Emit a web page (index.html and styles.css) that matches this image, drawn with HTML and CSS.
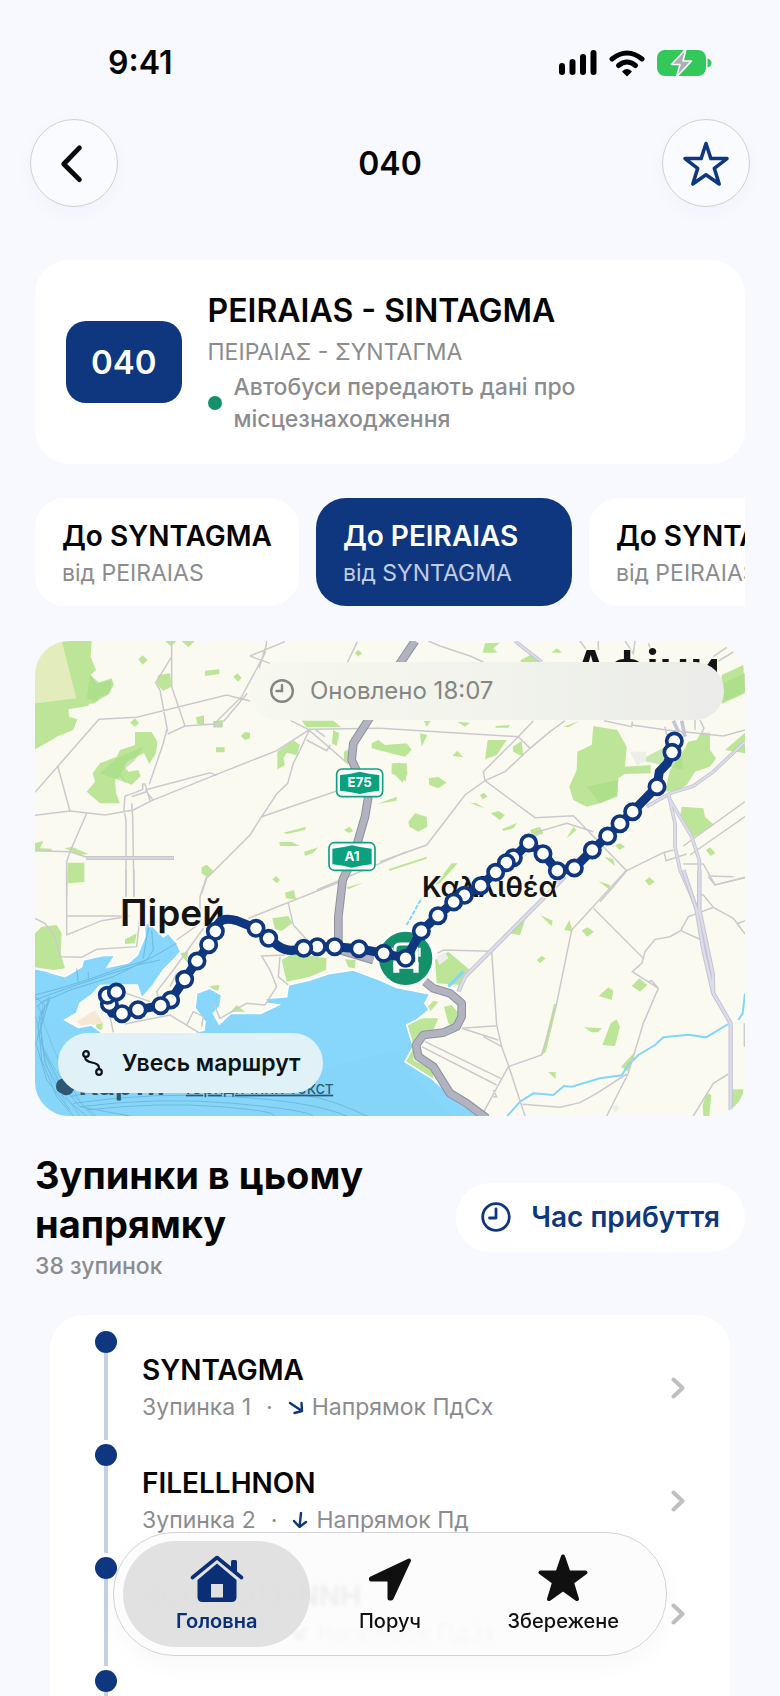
FILE: index.html
```html
<!DOCTYPE html>
<html lang="uk">
<head>
<meta charset="utf-8">
<meta name="viewport" content="width=device-width, initial-scale=1">
<title>040</title>
<link rel="stylesheet" href="styles.css">
</head>
<body>
<div class="app">
  <div class="status">
    <span class="status-time">9:41</span>
    <span class="status-icons">
      <svg width="38" height="26" viewBox="0 0 38 26" fill="#000"><rect x="0" y="13" width="6" height="12" rx="3"/><rect x="10.500" y="9" width="6" height="16" rx="3"/><rect x="21" y="4" width="6" height="21" rx="3"/><rect x="31.500" y="0" width="6" height="25" rx="3"/></svg>
      <svg width="36" height="27" viewBox="0 0 36 27" fill="none" stroke="#000" stroke-width="5" stroke-linecap="round"><path d="M3 9Q18-3 33 9"/><path d="M9.500 15.500Q18 8.500 26.500 15.500"/><path d="M14 21.500Q18 18 22 21.500L18 25.500Z" fill="#000" stroke-width="1.500" stroke-linejoin="round"/></svg>
      <svg width="55" height="28" viewBox="0 0 55 28"><rect x="0" y="1" width="49" height="26" rx="8" fill="#34c759"/><path d="M50.500 9.500q4 1 4 4.500t-4 4.500z" fill="#34c759"/><path d="M29 0L14.500 15.500H23L19.500 28L34.500 12H26Z" fill="#aeaeb4" stroke="#f8f9ff" stroke-width="1.600" stroke-linejoin="round"/></svg>
    </span>
  </div>

  <header class="nav">
    <button class="round" type="button" aria-label="Назад"><svg width="86" height="86" viewBox="0 0 88 88" fill="none" stroke="#0b0b0d" stroke-width="5" stroke-linecap="round" stroke-linejoin="round"><path d="M49.500 28.500L33.500 45L49.500 61"/></svg></button>
    <h1>040</h1>
    <button class="round" type="button" aria-label="Зберегти"><svg width="86" height="86" viewBox="0 0 88 88" fill="none" stroke="#0e377f" stroke-width="3.600" stroke-linejoin="round"><path d="M44 24L49 39.500L65.500 39.500L52.500 49.500L57.500 65.500L44 56L30.500 65.500L35.500 49.500L22.500 39.500L39 39.500Z"/></svg></button>
  </header>

  <main class="content">
    <section class="card route">
      <span class="badge">040</span>
      <div class="route-text">
        <h2>PEIRAIAS - SINTAGMA</h2>
        <p class="greek">ΠΕΙΡΑΙΑΣ - ΣΥΝΤΑΓΜΑ</p>
        <p class="live"><i class="live-dot"></i><span>Автобуси передають дані про місцезнаходження</span></p>
      </div>
    </section>

    <div class="directions">
      <button class="direction" type="button"><strong>До SYNTAGMA</strong><span>від PEIRAIAS</span></button>
      <button class="direction selected" type="button"><strong>До PEIRAIAS</strong><span>від SYNTAGMA</span></button>
      <button class="direction" type="button"><strong>До SYNTAGMA</strong><span>від PEIRAIAS</span></button>
    </div>

    <section class="map">
      <svg class="map-art" viewBox="45 33 2130 1425" preserveAspectRatio="xMidYMid slice">
        <rect x="45" y="33" width="2130" height="1425" fill="#fbfaf1"/>
        <path fill="#e3ecbd" d="M45 33H125L180 205L45 220Z"/>
        <g fill="#bde597">
          <path d="M125 33H215L212 80 228 120 212 135 230 160 275 145 282 165 262 195 240 200 225 220 178 225 168 200Z"/>
          <path d="M45 220L170 205 210 210 205 228 145 238 148 260 172 268 160 300 110 320 95 330 45 358Z"/>
          <path d="M345 306H395L412 335 408 370 388 402 372 370 325 392 312 410 325 425 355 420 362 438 335 465 315 455 300 440 285 450 288 490 300 520 240 520 200 485 225 455 218 430 240 400 290 380 300 360 345 345Z"/>
          <path d="M415 135L450 130 455 170 430 182 408 160ZM555 122L598 118V132L555 138ZM355 88L368 76 383 90 368 104ZM640 140L652 130 665 144 654 155ZM435 33H470L452 48ZM485 33H525L505 52ZM330 278L345 265 357 280 345 290ZM528 262L552 256V282H532ZM662 318L675 306 690 308V325L675 330ZM588 352H614V367H588ZM582 274L608 270V290H582Z"/>
          <path d="M845 272H940L964 292H860ZM772 365L820 330 840 345 830 375 800 368 790 385 795 405 772 418ZM940 300L958 310 950 348 936 340ZM972 365L985 358 985 400 972 390ZM1055 340L1075 330 1095 345 1160 340 1175 360 1155 380 1120 372 1055 355ZM1115 402L1140 398 1160 410 1158 455 1140 435 1115 432ZM1072 522L1130 500 1130 512ZM790 608L858 590 855 600 800 612ZM778 636H815L840 648H780ZM852 665L895 652 880 668 855 678ZM972 600L988 590 1000 604 985 608ZM45 640L70 632 60 655 95 656V664H45ZM135 655L155 650 205 672 180 675ZM143 698H193V756L143 760ZM545 712L560 704 580 722 562 742 545 730ZM757 748L768 738 780 750 770 760ZM1005 68L1015 60 1026 70 1014 80Z"/>
          <g transform="translate(1080 0)">
            <path d="M640 288L712 300 740 350 735 410 812 405V430L735 432 715 445 712 500 660 520 620 530 580 510 568 470 590 420 592 365 635 345Z"/>
            <path d="M925 335L950 330 962 308H990V360L1008 385 990 410 945 425 920 465 895 480 855 485 870 420 900 380ZM1025 135L1090 105 1095 190 1025 222ZM1035 360L1095 308V370ZM905 530L970 535 975 560 1002 585 940 622 900 560ZM315 40L360 38 340 55 352 68 308 68ZM515 68L530 55 547 68ZM422 90L450 75 485 96H422ZM550 290L600 272 565 292ZM232 275L270 278 255 290ZM345 288L390 285 385 293H348ZM132 273H152L140 290ZM120 310L142 315 125 350ZM323 330L380 330 350 375 315 388ZM398 350L425 333 430 380 400 365ZM217 378L232 362 250 382ZM38 400L80 400 82 430 68 458 35 425ZM146 445L175 440 200 458 175 475 148 465ZM300 495L312 488 322 500 308 508ZM268 518L290 520 312 535ZM332 550L355 543 375 555 360 570ZM366 598L412 578 400 595 370 603ZM85 575L105 550 140 560 142 590 115 605 88 590ZM25 718L140 680 140 686 30 722ZM165 765L215 700 233 700 180 760ZM450 600L480 590 490 610 460 622ZM560 625L580 590 590 600ZM705 645L720 640 735 650 718 660ZM672 680L700 688 705 708ZM978 660L990 652 1006 668 992 678ZM795 752L808 742 824 755 808 767ZM655 753L690 765V780Z"/>
          </g>
          <g transform="translate(0 720)">
            <path d="M45 190L65 170 110 165 125 190 122 250 135 295 100 300 45 292ZM315 208L350 190 345 220 315 222ZM757 145L805 138 817 160 785 183 765 178ZM795 68L822 60 828 88 798 85ZM980 52L1030 38 985 58ZM785 270L820 250 920 265 918 300 870 320 800 335ZM975 268L1007 270 1005 295 985 292ZM480 250L505 245 500 275ZM570 348L598 345 595 362 575 358ZM632 425L650 405 675 425ZM228 460L250 455 245 480 228 478Z"/>
          </g>
          <g transform="translate(1080 720)">
            <path d="M165 270L205 245 270 300 240 345 170 340ZM385 190L435 150 420 195ZM480 135L518 152 515 168ZM552 180L568 150 578 184ZM605 182L622 172 642 185 622 200ZM470 270L485 258 497 265 480 280ZM656 378L685 352 700 362 695 390ZM755 348L778 325 802 345 780 365ZM612 472L665 475 655 487H635ZM667 525L692 460 710 448 720 470 705 528ZM505 606H527V628ZM485 555L522 402H532L498 545ZM75 460L130 445 175 445 160 480 130 490 105 520 100 570 158 600 160 628 75 575ZM192 410L215 405 245 440 235 480 205 460ZM140 415L160 392 175 396 150 425ZM968 705L980 668 994 675 988 738H970ZM1058 658H1090V705L1050 720ZM723 590L765 545 745 605Z"/>
          </g>
        </g>
        <path fill="#a4db84" opacity=".6" d="M210 135L240 160 275 150 270 190 230 215 200 205ZM240 430L290 385 370 350 345 390 300 430 320 460 270 440ZM1860 390L1975 330 1990 420ZM2110 160L2175 130V185L2110 215ZM1700 470L1795 450 1790 495 1740 520Z"/>
        <path fill="#ededea" d="M1830 365H1878V395L1850 405ZM1250 980L1275 965 1285 985 1258 1005ZM1775 1432L1790 1422 1798 1436 1785 1448Z"/>
        <path fill="#f7e8d4" d="M170 1175L225 1140 250 1180 190 1190Z"/>
        <g transform="translate(0 720)">
          <path fill="#87d6fb" stroke="#fff" stroke-width="5" d="M40 295L75 302 100 310 135 320 185 290 190 270 222 262 250 256 285 256 262 292 325 278 352 255 358 240 375 200 372 155 395 165 430 200 445 190 470 218 482 245 468 262 430 300 400 345 365 385 352 345 320 345 240 347 215 375 180 400 170 430 135 450 175 472 215 465 250 492 510 490 552 480 555 455 525 415 530 370 570 355 605 375 600 410 580 430 598 462 632 430 722 430 775 405 740 400 735 385 800 380 805 345 870 330 930 310 1000 300 1080 330 1130 352 1180 362 1230 372 1215 400 1228 420 1190 450 1160 465 1180 530 1155 575 1235 625 1320 700 1400 742H40Z"/>
          <path fill="#7fd0f7" d="M1300 742L1180 620 1130 540 900 600 700 742Z" opacity=".2"/>
        </g>
        <g fill="none" stroke="#5ba6d0" stroke-width="3" opacity=".6">
          <path d="M45 1110L100 1090 170 1065 260 1035 340 1010 400 980 470 940M45 1095L120 1075 200 1050 300 1015 380 990 400 960 395 900M60 1120L150 1080 280 1040 350 1005 420 990M45 1100L75 1125 62 1200 75 1300 130 1400 200 1458M50 1130L90 1100 55 1180 65 1290 110 1400 160 1458M60 1150L85 1120 48 1240 80 1350 150 1440M90 1110L58 1160 70 1260 120 1360 180 1430 330 1458M175 1060L170 1015M205 1045V1025M370 985L380 920 390 880"/>
          <path d="M150 1400Q260 1375 480 1380T800 1390 1000 1440 1060 1458M160 1420Q400 1385 640 1400T980 1458M180 1430Q420 1400 640 1420T880 1458M200 1440Q420 1415 600 1430T760 1458"/>
          <path stroke-width="2" d="M55 1125Q90 1250 160 1380T300 1458M48 1160Q60 1300 180 1458M70 1110Q40 1290 140 1420M52 1210Q120 1380 230 1458"/>
        </g>
        <g fill="none" stroke="#83d6f8" stroke-width="6">
          <path d="M1462 1458L1500 1415 1540 1390 1600 1395 1632 1368 1655 1370 1740 1345 1805 1336 1825 1305 1855 1275 1905 1245 1930 1222 2005 1214 2058 1222 2125 1182"/>
          <path d="M2175 1090L2168 1150 2155 1170"/><path d="M1160 885L1205 805" stroke-dasharray="14 4"/><path d="M1285 1070L1330 1025" stroke-width="9"/>
        </g>
        <g fill="none" stroke="#cacace" stroke-width="4.500">
          <path d="M455 40V170L495 288M455 80L407 158 420 180 443 305M45 487L237 268 350 262 620 195 690 213M113 408L150 543M45 556L150 543 255 555 340 540 395 512 590 433 770 362 870 298 1080 295M375 480L570 428 590 436M390 512L375 462H368V478L345 488 315 498 312 540 318 570V800M335 520L338 560 342 800M335 500L380 485 400 512M200 550L150 665 140 695V800M45 662L150 665 200 682M443 312L495 288 582 282 665 200 735 70 740 33M610 275L682 190M582 275H605V290H582ZM440 300L430 340 388 462M690 78L795 35M690 78L750 100M735 55L718 115M1012 35L983 96M812 272L865 298 985 402M870 295L845 350 820 400 803 460 770 492 725 560 690 615 585 720 560 745 545 790M725 560L950 483M860 330L920 362 930 345M885 298L915 320M890 780L1080 700 1160 665"/>
          <path d="M198 684H462" stroke-width="12" stroke="#c6c6ca"/><path d="M198 684H460" stroke="#dcdce0" stroke-width="4"/>
        </g>
        <g transform="translate(1080 0)" fill="none" stroke="#cacace" stroke-width="4.500">
          <path d="M145 33L180 48 270 78 310 96M0 295L415 320 310 425 315 452 375 425 450 355 415 320 460 272M450 355L510 305 555 272M315 452L255 495 140 645 0 695M315 452L465 563 580 557 660 640M465 608L560 580 640 605M660 640L740 722 700 770 660 815M740 722L850 668 880 660M852 665L858 692 920 672M672 272L755 290 757 275M755 285L860 300 1030 318 1095 300M860 315L855 290M945 270V300M960 270L972 295 965 308M1095 515L910 648M1095 560L930 675M910 702H970L1005 765 1095 743M985 738L1060 740M600 33L620 60M655 33V60M735 33L760 70 765 33M805 40L820 75M1010 96L1060 66M1000 80L1040 52"/>
          <g stroke="#c3c4d4" stroke-width="11"><path d="M405 33L485 96M880 272L895 305M905 272L915 320M1095 335L1000 425 940 468 870 490 800 530M865 490L885 580V650L900 720 940 810 960 860M870 510L935 620 958 690V840"/></g>
          <g stroke="#dcdde8" stroke-width="6"><path d="M405 33L485 96M1095 335L1000 425 940 468 870 490 800 530M865 490L885 580V650L900 720 940 810 960 860M870 510L935 620 958 690V840"/></g>
        </g>
        <g transform="translate(0 720)" fill="none" stroke="#cacace" stroke-width="4.500">
          <path d="M140 0V195L245 152 330 138M140 138H320M45 145L75 160 105 200 120 260 185 262 230 238 350 230 360 140M318 0V80M342 0V80M560 20L540 80V160L470 210M685 145L970 32M805 100L820 165 870 220M550 175L460 300 410 365 415 380M280 350L320 370 390 395M315 462L450 435 540 490M470 310L450 350M500 465L520 425 550 440 545 470M280 487L270 440M795 255L725 258 750 300 770 350 735 405 680 400 600 445 580 400M780 260L775 320 805 345"/>
        </g>
        <g transform="translate(1080 720)" fill="none" stroke="#cacace" stroke-width="4.500">
          <path d="M172 250L190 240 335 244 350 465 365 530 385 585 435 738M245 475L350 467M245 475L355 510M310 500L365 530M125 530L350 645M135 515L362 625M310 728L385 590 485 555 530 400 575 180 740 0M640 115L790 265 785 280 757 305 835 355 790 460 745 610 680 738M805 335L815 332 835 355M790 265L795 245 825 208 870 200 902 182 925 140 1000 112 970 75H950M902 182L965 210M1000 112L1060 145 1075 165 1095 192M1070 162L1095 152M985 20L1005 45 1095 22M740 612L650 670 600 698 540 712 428 703M340 660L350 680 340 680M940 738L1000 640 1045 612M1093 460V530"/>
          <path stroke="#c3c4d4" stroke-width="13" d="M555 20L330 245 255 320 235 365M910 0L950 120 970 240 1000 370 1052 460V720M958 0V120L975 200 998 310 1000 370"/>
          <path stroke="#dcdde8" stroke-width="7" d="M555 20L330 245 255 320 235 365M910 0L950 120 970 240 1000 370 1052 460V720M958 0V120L975 200 998 310 1000 370"/>
        </g>
        <g fill="none" stroke-linejoin="round">
          <path stroke="#8e919c" stroke-width="26" d="M1185 33L1140 100 1045 270 1000 340 995 390 1045 500 1035 560 1000 680 968 750 955 860V950M960 960L1060 990M1215 1055L1240 1075 1290 1090 1325 1120V1160L1310 1190 1270 1208 1210 1215 1188 1245 1195 1280 1240 1310 1290 1390 1340 1420 1400 1465"/>
          <path stroke="#b1b4c0" stroke-width="20" d="M1185 33L1140 100 1045 270 1000 340 995 390 1045 500 1035 560 1000 680 968 750 955 860V950M960 960L1060 990M1215 1055L1240 1075 1290 1090 1325 1120V1160L1310 1190 1270 1208 1210 1215 1188 1245 1195 1280 1240 1310 1290 1390 1340 1420 1400 1465"/>
        </g>
        <g class="shields">
          <g transform="translate(948 415)"><rect x="2" y="2" width="138" height="83" rx="16" fill="#fff" stroke="#12a083" stroke-width="5"/><path d="M12 20Q40 18 71 10Q102 18 130 20V67Q102 69 71 77Q40 69 12 67Z" fill="#0aa17f"/><text x="71" y="57">E75</text></g>
          <g transform="translate(925 636)"><rect x="2" y="2" width="138" height="83" rx="16" fill="#fff" stroke="#12a083" stroke-width="5"/><path d="M12 20Q40 18 71 10Q102 18 130 20V67Q102 69 71 77Q40 69 12 67Z" fill="#0aa17f"/><text x="71" y="57">A1</text></g>
        </g>
        <g class="places">
          <text x="1658" y="168" font-size="150">Афіни</text>
          <text x="300" y="888" font-size="111">Пірей</text>
          <text x="1206" y="800" font-size="84">Καλλιθέα</text>
        </g>
        <g class="attribution">
          <path d="M108 1370q0-26 30-24q24 0 28 22q-6 18-14 24q-18 8-28-2q-16-6-16-20z"/>
          <text x="176" y="1396" font-size="84" font-weight="700">Карти</text>
          <text x="498" y="1391" font-size="51" text-decoration="underline">Юридичний текст</text>
        </g>
        <circle cx="1157" cy="985" r="84" fill="#14906a" stroke="#fff" stroke-width="8"/>
        <path fill="none" stroke="#fff" stroke-width="9" stroke-linejoin="round" d="M1125 1010V955Q1125 943 1140 942H1175Q1190 943 1190 955V1010Z"/>
        <path fill="#fff" d="M1120 996H1196V1028H1180V1016H1138V1028H1120ZM1112 953H1119V980H1112ZM1195 953H1202V980H1195Z"/>
        <path fill="none" stroke="#0e377f" stroke-width="27" stroke-linejoin="round" stroke-linecap="round" d="M1963 333L1956 367 1942 400 1918 425 1911 470 1838 545 1800 581 1763 618 1717 660 1663 714 1612 722 1569 671 1526 639 1480 683 1427 727 1382 767 1333 796 1301 816 1254 857 1204 903 1175 955 1157 985 1091 970 1017 956 944 950 892 950 851 955Q805 970 775 948L746 925 708 895 650 872Q610 860 595 880L566 944 531 993 494 1048 452 1110 422 1127 354 1139 306 1151 276 1150 262 1120V1096L289 1086"/>
        <g fill="#fff" stroke="#0e377f" stroke-width="11">
          <circle cx="1963" cy="333" r="23"/><circle cx="1956" cy="367" r="23"/><circle cx="1911" cy="470" r="23"/><circle cx="1838" cy="545" r="23"/><circle cx="1800" cy="581" r="23"/><circle cx="1763" cy="618" r="23"/><circle cx="1717" cy="660" r="23"/><circle cx="1663" cy="714" r="23"/><circle cx="1612" cy="722" r="23"/><circle cx="1569" cy="671" r="23"/><circle cx="1526" cy="639" r="23"/><circle cx="1480" cy="683" r="23"/><circle cx="1459" cy="698" r="23"/><circle cx="1427" cy="727" r="23"/><circle cx="1382" cy="767" r="23"/><circle cx="1333" cy="796" r="23"/><circle cx="1301" cy="816" r="23"/><circle cx="1254" cy="857" r="23"/><circle cx="1204" cy="903" r="23"/><circle cx="1157" cy="985" r="23"/><circle cx="1091" cy="970" r="23"/><circle cx="1017" cy="956" r="23"/><circle cx="892" cy="950" r="23"/><circle cx="944" cy="950" r="23"/><circle cx="851" cy="955" r="23"/><circle cx="746" cy="925" r="23"/><circle cx="708" cy="895" r="23"/><circle cx="586" cy="904" r="23"/><circle cx="566" cy="944" r="23"/><circle cx="531" cy="993" r="23"/><circle cx="494" cy="1048" r="23"/><circle cx="452" cy="1110" r="23"/><circle cx="422" cy="1127" r="23"/><circle cx="354" cy="1139" r="23"/><circle cx="268" cy="1122" r="23"/><circle cx="306" cy="1151" r="23"/><circle cx="262" cy="1096" r="23"/><circle cx="289" cy="1086" r="23"/>
        </g>
      </svg>
      <p class="updated"><svg width="24" height="24" viewBox="0 0 24 24" fill="none" stroke="#858683" stroke-width="2.400" stroke-linecap="round"><circle cx="12" cy="12" r="10.800"/><path d="M12 6V12H6.500"/></svg>Оновлено 18:07</p>
      <button class="whole" type="button"><svg width="24" height="26" viewBox="0 0 24 26" fill="none" stroke="#0c1418" stroke-width="2.200" stroke-linecap="round"><circle cx="5" cy="4" r="2.800"/><circle cx="18" cy="22" r="2.800"/><path d="M4 7C4 15 19 10 18 19"/></svg>Увесь маршрут</button>
    </section>

    <section class="stops-head">
      <div>
        <h2>Зупинки в цьому напрямку</h2>
        <p>38 зупинок</p>
      </div>
      <button class="arrival" type="button"><svg width="30" height="30" viewBox="0 0 30 30" fill="none" stroke="#0e377f" stroke-width="2.800" stroke-linecap="round" stroke-linejoin="round"><circle cx="15" cy="15" r="13.300"/><path d="M15 7V16H8.500"/></svg>Час прибуття</button>
    </section>

    <ol class="card stops">
      <li class="stop">
        <span class="rail"></span>
        <a class="stop-link" href="#stop-1"><strong>SYNTAGMA</strong><span class="meta">Зупинка 1<span class="sep">·</span><svg width="16" height="16" viewBox="0 0 16 16" fill="none" stroke="#0e377f" stroke-width="2.400" stroke-linecap="round" stroke-linejoin="round"><path d="M2 4L14 12M13.500 4L14 12L6.500 14"/></svg>Напрямок ПдСх</span></a>
        <svg class="chevron" width="14" height="22" viewBox="0 0 14 22"><path d="M2.500 2.500L11.500 11L2.500 19.500"/></svg>
      </li>
      <li class="stop">
        <span class="rail"></span>
        <a class="stop-link" href="#stop-2"><strong>FILELLHNON</strong><span class="meta">Зупинка 2<span class="sep">·</span><svg width="16" height="16" viewBox="0 0 16 16" fill="none" stroke="#0e377f" stroke-width="2.400" stroke-linecap="round" stroke-linejoin="round"><path d="M9 1L7.500 15M2 9L7.500 15L14 10"/></svg>Напрямок Пд</span></a>
        <svg class="chevron" width="14" height="22" viewBox="0 0 14 22"><path d="M2.500 2.500L11.500 11L2.500 19.500"/></svg>
      </li>
      <li class="stop">
        <span class="rail"></span>
        <a class="stop-link" href="#stop-3"><strong>AGIA FOTEINNH</strong><span class="meta">Зупинка 3<span class="sep">·</span><svg width="16" height="16" viewBox="0 0 16 16" fill="none" stroke="#0e377f" stroke-width="2.400" stroke-linecap="round" stroke-linejoin="round"><path d="M14 3L3 13M3 5V13H11"/></svg>Напрямок ПдЗх</span></a>
        <svg class="chevron" width="14" height="22" viewBox="0 0 14 22"><path d="M2.500 2.500L11.500 11L2.500 19.500"/></svg>
      </li>
      <li class="stop"><span class="rail"></span></li>
    </ol>
  </main>

  <nav class="tabbar">
    <button class="tab active" type="button"><svg width="54" height="48" viewBox="0 0 54 48" fill="#0b2f77"><path fill="none" stroke="#0b2f77" stroke-width="3.600" stroke-linecap="round" stroke-linejoin="round" d="M2.500 23.500L27 3.500L51.500 23.500"/><path d="M41 7.500q0-1.500 1.500-1.500h3q1.500 0 1.500 1.500V18L41 13Z"/><path fill-rule="evenodd" d="M27 9.500L46.500 26V43q0 5-5 5H12.500q-5 0-5-5V26ZM21 30V43.500H33V30Z"/></svg>Головна</button>
    <button class="tab" type="button"><svg width="54" height="48" viewBox="0 0 54 48" fill="#101010" stroke="#101010" stroke-width="4" stroke-linejoin="round"><path d="M46 6.500L8 24.500V25.500H26.500V44.500H28.500Z"/></svg>Поруч</button>
    <button class="tab" type="button"><svg width="54" height="48" viewBox="0 0 54 48" fill="#101010" stroke="#101010" stroke-width="4" stroke-linejoin="round"><path d="M27 2.500L32.500 18.500H49.500L36 28.500L41 45L27 35L13 45L18 28.500L4.500 18.500H21.500Z"/></svg>Збережене</button>
  </nav>
</div>
</body>
</html>
```
FILE: styles.css
```css
* { box-sizing: border-box; margin: 0; padding: 0; }

body {
  background: #f8f9ff;
  color: #050506;
  font-family: Inter, "Noto Sans", sans-serif;
}

button { border: 0; background: none; font: inherit; color: inherit; cursor: pointer; }
svg { display: block; flex: none; }
a { color: inherit; text-decoration: none; }

.app { position: relative; height: 100vh; overflow: hidden; }

.status {
  display: flex;
  justify-content: space-between;
  align-items: center;
  padding: 43px 68px 36px 108px;
}
.status-time { font-size: 32px; line-height: 40px; font-weight: 600; }
.status-icons { display: flex; align-items: center; gap: 12px; }

.nav {
  display: flex;
  justify-content: space-between;
  align-items: center;
  padding: 0 30px;
}
.nav h1 { font-size: 32px; font-weight: 600; }
.round {
  width: 88px;
  height: 88px;
  border: 1px solid #cfd0d6;
  border-radius: 50%;
  background: #fafbff;
  box-shadow: 0 6px 20px rgba(60, 70, 120, .03);
  display: flex;
  align-items: center;
  justify-content: center;
}

.content { padding: 53px 35px 0; }

.card { background: #fff; border-radius: 34px; }

.route {
  display: flex;
  align-items: center;
  gap: 26px;
  padding: 29px 31px;
}
.badge {
  flex: none;
  padding: 20px 25px;
  border-radius: 20px;
  background: #0e377f;
  color: #fff;
  font-size: 33px;
  line-height: 42px;
  font-weight: 600;
}
.route-text h2 { font-size: 32px; line-height: 44px; font-weight: 600; }
.greek { font-size: 23px; line-height: 38px; color: #8c8c8e; }
.live {
  display: flex;
  align-items: center;
  gap: 12px;
  max-width: 400px;
  font-size: 23px;
  line-height: 32px;
  font-weight: 500;
  color: #8c8c8e;
}
.live-dot { flex: none; width: 14px; height: 14px; border-radius: 50%; background: #14906a; }

.directions {
  display: flex;
  gap: 17px;
  margin-top: 34px;
  overflow: hidden;
}
.direction {
  flex: none;
  min-width: 256px;
  padding: 19px 27px 15px;
  border-radius: 30px;
  background: #fff;
  text-align: left;
  white-space: nowrap;
}
.direction strong { display: block; font-size: 28px; line-height: 38px; font-weight: 600; }
.direction span { display: block; font-size: 23px; line-height: 36px; color: #8c8c8e; }
.direction.selected { background: #0e377f; color: #fff; }
.direction.selected span { color: #c0cde6; }

.map {
  position: relative;
  margin-top: 35px;
  border-radius: 34px;
  overflow: hidden;
}
.map-art { width: 100%; height: auto; }
.shields text { font-size: 40px; font-weight: 700; fill: #fff; text-anchor: middle; }
.places text {
  font-weight: 600;
  fill: #141414;
  stroke: #fbfaf1;
  stroke-width: 8px;
  paint-order: stroke;
}
.attribution { fill: #2c5873; }

.updated {
  position: absolute;
  top: 21px;
  right: 21px;
  left: 215px;
  display: flex;
  align-items: center;
  gap: 16px;
  padding: 0 20px;
  border-radius: 29px;
  background: linear-gradient(90deg, #f7f8ef, #f1f3ec 50%, #ebece9);
  color: #858683;
  font-size: 24px;
  line-height: 58px;
}
.whole {
  position: absolute;
  left: 23px;
  bottom: 23px;
  display: flex;
  align-items: center;
  gap: 17px;
  padding: 0 23px;
  border-radius: 30px;
  background: #e0f2f8;
  color: #0c1418;
  font-size: 23px;
  line-height: 60px;
  font-weight: 600;
}

.stops-head {
  display: flex;
  justify-content: space-between;
  align-items: center;
  gap: 24px;
  margin-top: 35px;
}
.stops-head h2 { font-size: 38px; line-height: 49px; font-weight: 700; }
.stops-head p { font-size: 23px; line-height: 34px; font-weight: 500; color: #8c8c8e; }
.arrival {
  flex: none;
  display: flex;
  align-items: center;
  gap: 20px;
  padding: 0 25px;
  border-radius: 34px;
  background: #fff;
  color: #0e377f;
  font-size: 28px;
  line-height: 69px;
  font-weight: 600;
}

.stops {
  margin: 32px 15px 0;
  padding: 16px 45px 0;
  list-style: none;
}
.stop { display: flex; align-items: center; gap: 25px; min-height: 113px; }
.rail {
  align-self: stretch;
  flex: none;
  width: 22px;
  display: flex;
  flex-direction: column;
  align-items: center;
}
.rail::before { content: ""; width: 22px; height: 22px; border-radius: 50%; background: #0e377f; }
.rail::after { content: ""; flex: 1; width: 4px; margin-bottom: 4px; background: #c5cfe5; }
.stop-link { flex: 1; }
.stop-link strong { display: block; font-size: 28px; line-height: 38px; font-weight: 600; }
.meta {
  display: flex;
  align-items: center;
  gap: 8px;
  font-size: 23px;
  line-height: 36px;
  color: #8c8c8e;
}
.sep { margin: 0 7px; }
.chevron { fill: none; stroke: #bfbfc2; stroke-width: 4; stroke-linecap: round; stroke-linejoin: round; }

.tabbar {
  position: absolute;
  left: 50%;
  bottom: 40px;
  transform: translateX(-50%);
  width: 554px;
  max-width: calc(100% - 32px);
  display: grid;
  grid-template-columns: repeat(3, 1fr);
  padding: 8px 16px;
  border: 1px solid #d3d3d5;
  border-radius: 61px;
  background: rgba(252, 252, 252, .94);
  backdrop-filter: blur(2px);
  box-shadow: 0 8px 24px rgba(0, 0, 0, .03);
}
.tab {
  position: relative;
  display: flex;
  flex-direction: column;
  align-items: center;
  gap: 5px;
  padding: 13px 0 12px;
  color: #101010;
  font-size: 20px;
  line-height: 28px;
  font-weight: 500;
}
.tab.active { color: #0b2f77; font-weight: 600; }
.tab.active::before {
  content: "";
  position: absolute;
  inset: 0 -7px;
  z-index: -1;
  border-radius: 53px;
  background: rgba(222, 222, 223, .9);
}
```
